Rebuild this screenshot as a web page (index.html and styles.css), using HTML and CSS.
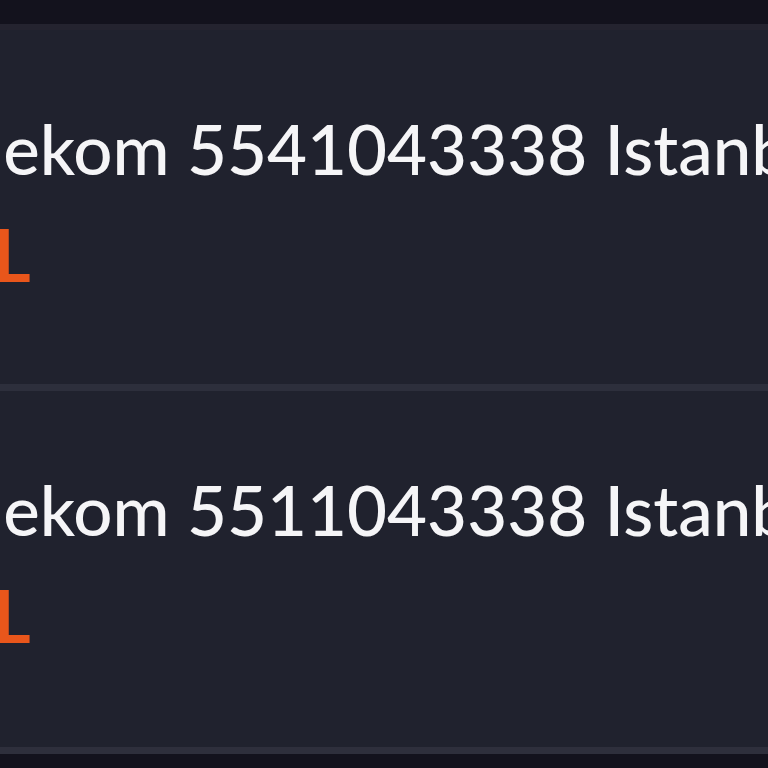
FILE: index.html
```html
<!DOCTYPE html>
<html lang="tr">
<head>
<meta charset="utf-8">
<link rel="stylesheet" href="styles.css">
</head>
<body>
<div class="page">
  <div class="topbar"></div>
  <div class="list">
    <div class="card">
      <div class="inner">
        <div class="title">Türk Telekom 5541043338 Istanbul</div>
        <div class="price">TL</div>
      </div>
    </div>
    <div class="card">
      <div class="inner">
        <div class="title">Türk Telekom 5511043338 Istanbul</div>
        <div class="price">TL</div>
      </div>
    </div>
  </div>
  <div class="bottombar"></div>
</div>
</body>
</html>
```
FILE: styles.css
```css
html, body {
  margin: 0;
  padding: 0;
  background: #13121d;
  overflow: hidden;
  width: 768px;
  height: 768px;
}
.page {
  display: flex;
  flex-direction: column;
  height: 768px;
}
.topbar {
  height: 24px;
  background: #13121d;
}
.list {
  display: flex;
  flex-direction: column;
}
.card {
  background: #20222e;
  border-top: 6px solid #24232f;
  height: 354px;
  overflow: hidden;
}
.card + .card {
  border-top: 7px solid #2d2f3c;
  height: 356px;
}
.bottombar {
  height: 7px;
  background: #2e2f3c;
}
.inner {
  margin-left: -231px;
  padding-top: 84px;
  display: flex;
  flex-direction: column;
  gap: 35px;
  font-family: "Lato", "Noto Sans", sans-serif;
  white-space: nowrap;
}
.title {
  color: #f5f5f7;
  font-size: 69px;
  line-height: 70px;
  font-weight: 500;
}
.price {
  color: #e9561b;
  font-size: 72px;
  line-height: 70px;
  font-weight: 700;
  margin-left: 181px;
}
```
